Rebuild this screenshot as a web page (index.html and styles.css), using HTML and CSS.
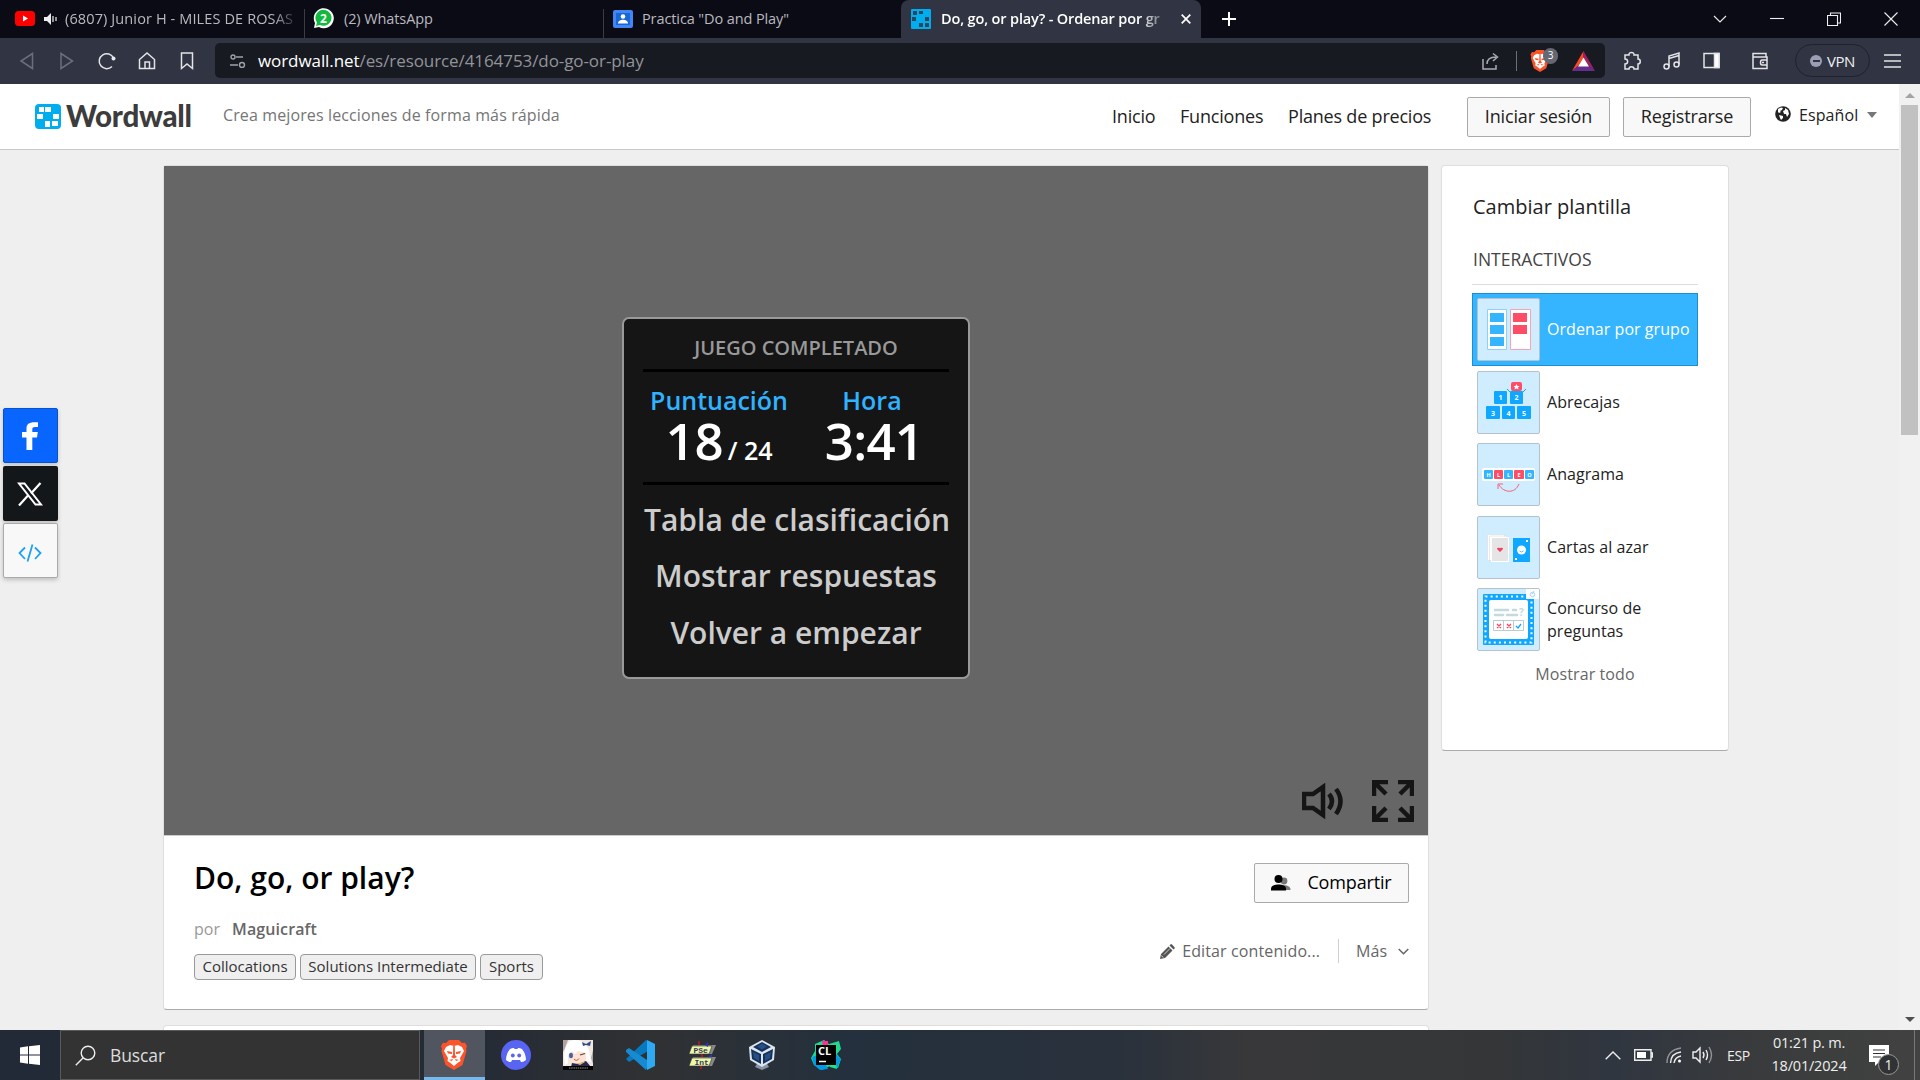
FILE: index.html
```html
<!DOCTYPE html>
<html lang="es">
<head>
<meta charset="utf-8">
<title>Do, go, or play? - Ordenar por grupo</title>
<link rel="stylesheet" href="styles.css">
</head>
<body>
<svg class="defs" width="0" height="0">
  <symbol id="brave" viewBox="0 0 26 30">
    <path fill="#fb542b" d="M8 0h10l3 3 3-.3L26 6l-1 3 .5 2-4 14L13 30 4.500 25 .5 11 1 9 0 6l2-3.300L5 3z"/>
    <path fill="#fff" d="M5 7l4-2 4 1 4-1 4 2 2 4-4 7 .5 3-3 2-3.500 3-3.500-3-3-2L7 18l-4-7z"/>
    <path fill="#fb542b" d="M6 11l5 1v2l-4-.5zM20 11l-5 1v2l4-.5zM12.200 6h1.600L14 15l2 2-3 1.500L10 17l2-2zM8 20l4-1-1 2zM18 20l-4-1 1 2z"/>
  </symbol>
</svg>
<header class="tabs">
  <div class="tab tab-video">
    <svg width="20" height="15" viewBox="0 0 20 15"><rect width="20" height="15" rx="3.500" fill="#f00"/><path d="M8 4.500v6l5-3z" fill="#fff"/></svg>
    <svg class="speaker" width="14" height="12" viewBox="0 0 14 12"><path d="M0 4h3l4-4v12L3 8H0z" fill="#eee"/><path d="M9 3v6M12 4v4" stroke="#ddd" stroke-width="1.300"/></svg>
    <span class="tab-title">(6807) Junior H - MILES DE ROSAS</span>
  </div>
  <div class="tab tab-chat">
    <svg width="21" height="21" viewBox="0 0 21 21"><path d="M1 20l1-5A10 10 0 1 1 6 19z" fill="#fff"/><path d="M3 18l1-3.500A8 8 0 1 1 7 17z" fill="#12b93e"/><text x="7" y="15" class="wa-count">2</text></svg>
    <span class="tab-title">(2) WhatsApp</span>
  </div>
  <div class="tab tab-class">
    <svg width="20" height="18" viewBox="0 0 20 18"><rect width="20" height="18" rx="2" fill="#4285f4"/><rect x="3" y="3" width="14" height="12" fill="#1967d2"/><circle cx="10" cy="6.500" r="2.300" fill="#fff"/><path d="M5 13.500c0-5 10-5 10 0z" fill="#fff"/></svg>
    <span class="tab-title">Practica "Do and Play"</span>
  </div>
  <div class="tab tab-active">
    <svg width="20" height="20" viewBox="0 0 20 20"><rect width="20" height="20" rx="1" fill="#00aeef"/><path fill="#313442" d="M2 2h4v4H2zM8 2h4v3H8zM1 8h4v4H1zM14 8h4v4h-4zM8 14h4v4H8zM14 14h4v4h-4z" opacity=".85"/></svg>
    <span class="tab-title">Do, go, or play? - Ordenar por gr</span>
    <svg class="tab-close" width="10" height="10" viewBox="0 0 10 10"><path d="M.7.7l8.600 8.600M9.300.7L.7 9.300" stroke="#fff" stroke-width="1.700"/></svg>
  </div>
  <svg class="new-tab" width="16" height="16" viewBox="0 0 16 16"><path d="M8 1v14M1 8h14" stroke="#fff" stroke-width="2"/></svg>
  <div class="window-controls">
    <svg viewBox="0 0 14 14"><path d="M1 4l6 6 6-6"/></svg>
    <svg viewBox="0 0 14 14"><path d="M0 6.500h14"/></svg>
    <svg viewBox="0 0 14 14"><path d="M.5 3.500h10v10H.5zM3.500 3V1h10v10h-2.500"/></svg>
    <svg viewBox="0 0 14 14"><path d="M.5.5l13 13M13.500.5l-13 13"/></svg>
  </div>
</header>

<div class="toolbar">
  <nav class="history">
    <svg class="dim" viewBox="0 0 20 20"><path d="M15.500 2.500v15L4 10z"/></svg>
    <svg class="dim" viewBox="0 0 20 20"><path d="M4 2.500v15L15.500 10z"/></svg>
    <svg viewBox="0 0 20 20"><path d="M15 15.500A7.500 7.500 0 1 1 16.500 7"/><circle cx="16.500" cy="7.500" r="2" fill="#e8e8ee" stroke="none"/></svg>
    <svg viewBox="0 0 20 20"><path d="M2.500 8.500L10 2l7.500 6.500V17.500h-15zM8 17v-6h4.500v6"/></svg>
    <svg viewBox="0 0 20 20"><path d="M4.500 2h11v15.500L10 13l-5.500 4.500z"/></svg>
  </nav>
  <div class="address">
    <svg class="site-info" width="16" height="14" viewBox="0 0 16 14"><circle cx="3" cy="3" r="2"/><path d="M6 3h7M0 11h8"/><circle cx="12" cy="11" r="2.500"/></svg>
    <span class="url"><b>wordwall.net</b>/es/resource/4164753/do-go-or-play</span>
    <svg class="share" width="18" height="18" viewBox="0 0 18 18"><path d="M1 7v10h13v-4M5 12c0-5 3-7 9-7M11 1.500L15.500 5 11 9"/></svg>
    <i class="divider"></i>
    <div class="shield"><svg width="20" height="22"><use href="#brave"/></svg><span>3</span></div>
    <svg width="23" height="20" viewBox="0 0 23 20"><path fill="#ff4724" d="M11.500 0v7L6 15l-6 5z"/><path fill="#9e1f63" d="M11.500 0L23 20l-6-5-5.500-8z"/><path fill="#662d91" d="M0 20l6-5h11l6 5z"/><path fill="#fff" d="M11.500 6.500l5.500 9H6z"/></svg>
  </div>
  <div class="tools">
    <svg viewBox="0 0 20 20"><path d="M3 4h4c-.5-3.500 5.500-3.500 5 0h4v4c3 0 3 5 0 5v5h-4c0-3-5-3-5 0H3v-5c3.500 0 3.500-5 0-5z"/></svg>
    <svg viewBox="0 0 20 20"><path d="M7 15.500V5l10-3v11.500M7 7.500l10-3"/><circle cx="4.500" cy="15.500" r="2.500"/><circle cx="14.500" cy="13.500" r="2.500"/></svg>
    <svg viewBox="0 0 20 20"><path d="M2 2.500h15v14H2z"/><path d="M12.500 2.500H17v14h-4.500z" fill="#fff"/></svg>
    <svg viewBox="0 0 20 20"><path d="M16 6V2.500H3v15h14V6H3.500M17 9h-5c-2 0-2 5 0 5h5zM12 11.500h2"/></svg>
  </div>
  <div class="vpn"><i></i>VPN</div>
  <svg class="menu" width="17" height="14" viewBox="0 0 17 14"><path d="M0 1h17M0 7h17M0 13h17"/></svg>
</div>

<div class="viewport">
  <div class="page">
    <header class="site-header">
      <svg class="brand-mark" width="26" height="25" viewBox="0 0 26 25"><rect width="26" height="25" rx="4" fill="#00aeef"/><path fill="#fff" d="M4 3h5v5H4zM10 3h6v5h-6zM2 10h6v5H2zM18 10h6v5h-6zM10 17h5v6h-5zM17 17h6v5h-6z"/></svg>
      <span class="brand">Wordwall</span>
      <span class="tagline">Crea mejores lecciones de forma más rápida</span>
      <nav class="site-nav">
        <a class="n-home">Inicio</a><a class="n-feat">Funciones</a><a class="n-plan">Planes de precios</a>
      </nav>
      <button class="btn login">Iniciar sesión</button>
      <button class="btn signup">Registrarse</button>
      <div class="language">
        <svg width="16" height="16" viewBox="0 0 16 16"><circle cx="8" cy="8" r="7.800" fill="#222"/><path fill="#fff" d="M3 3l3-1.500 2 .5-1 2-2 1 1 1-2 1-1-1zM10 2l3 2 1 4-2 3-1-3-2 0-1-3 2-1zM4 9l4 1 0 2-2 2-1-2z"/></svg>
        <span>Español</span><i></i>
      </div>
    </header>

    <main class="content">
      <div class="primary">
        <section class="activity">
          <div class="stage">
            <div class="result">
              <h2>JUEGO COMPLETADO</h2>
              <div class="scores">
                <div class="score points"><h3>Puntuación</h3><p>18<small>/ 24</small></p></div>
                <div class="score time"><h3>Hora</h3><p>3:41</p></div>
              </div>
              <a class="r1">Tabla de clasificación</a>
              <a class="r2">Mostrar respuestas</a>
              <a class="r3">Volver a empezar</a>
            </div>
            <div class="stage-controls">
              <svg width="42" height="36" viewBox="0 0 42 36"><path d="M2 11h9L21 4v28l-10-7H2z"/><path d="M27 11q6 7 0 15M34 6q9 12 0 25"/></svg>
              <svg width="42" height="42" viewBox="0 0 42 42"><path d="M2 16V2h14M2 2l12 12M26 2h14v14M40 2L28 14M2 26v14h14M2 40l12-12M26 40h14V26M40 40L28 28"/></svg>
            </div>
          </div>
          <div class="details">
            <div class="about">
              <h1>Do, go, or play?</h1>
              <p class="author">por <b>Maguicraft</b></p>
              <div class="tags"><span class="t1">Collocations</span><span class="t2">Solutions Intermediate</span><span class="t3">Sports</span></div>
            </div>
            <div class="actions">
              <button class="btn share-btn"><svg width="20" height="16" viewBox="0 0 20 16"><g fill="#777"><circle cx="13" cy="6" r="3.400"/><path d="M9 15v-3c2-3 11-2 10.500 3z"/></g><circle cx="7.500" cy="4" r="4"/><path d="M0 15.500v-2C0 8 15 8 15 13.500v2z"/></svg>Compartir</button>
              <div class="edit-row">
                <svg width="15" height="15" viewBox="0 0 15 15"><path fill="#555" d="M0 15l1-5 7.500-7.500 4 4L5 14zM9.500 1.500L11 0q1 0 4 4l-1.500 1.500z"/><path d="M4 10.500l6-6M1.300 11.500l2.200 2.200" stroke="#fff" stroke-width=".7"/></svg>
                <span class="edit">Editar contenido...</span><i></i><span class="more">Más</span>
                <svg width="11" height="7" viewBox="0 0 11 7"><path d="M.7 1l4.800 4.800L10.300 1" fill="none" stroke="#666" stroke-width="1.500"/></svg>
              </div>
            </div>
          </div>
        </section>
        <section class="next-card"></section>
      </div>

      <aside class="templates">
        <h2>Cambiar plantilla</h2>
        <h3>INTERACTIVOS</h3>
        <ul>
          <li class="selected"><svg class="thumb" viewBox="0 0 61 61"><path fill="#fff" stroke="#8cd0fb" d="M9.500 10.500h19v40h-19z"/><path fill="#fff" stroke="#f7a3b1" d="M32.500 10.500h20v40h-20z"/><path fill="#35b5ff" d="M12 14h14v9H12zM12 26h14v9H12zM12 38h14v9H12z"/><path fill="#ff4d67" d="M35 14h14v9H35zM35 26h14v9H35z"/></svg><span>Ordenar por grupo</span></li>
          <li><svg class="thumb" viewBox="0 0 61 61"><g fill="#0fa7ff"><rect x="16" y="19" width="13" height="13" rx="1"/><rect x="32" y="19" width="13" height="13" rx="1"/><rect x="8" y="34" width="14" height="13" rx="1"/><rect x="24" y="34" width="13" height="13" rx="1"/><rect x="39" y="34" width="14" height="13" rx="1"/></g><rect x="33" y="10" width="11" height="9" rx="2" fill="#ff4d67"/><path fill="#fff" d="M38.500 12l1 2h2l-1.500 1.500.5 2-2-1-2 1 .5-2L35.500 14h2z"/><path d="M29 17l3 3M48 17l-3 3" stroke="#0fa7ff"/><g class="box-num"><text x="22.500" y="28">1</text><text x="38.500" y="28">2</text><text x="15" y="43.500">3</text><text x="30.500" y="43.500">4</text><text x="46" y="43.500">5</text></g></svg><span>Abrecajas</span></li>
          <li><svg class="thumb" viewBox="0 0 61 61"><rect x="4" y="24" width="53" height="13" rx="2" fill="#fff"/><g fill="#35b5ff"><rect x="6" y="26" width="9" height="9" rx="1"/><rect x="26" y="26" width="9" height="9" rx="1"/><rect x="47" y="26" width="9" height="9" rx="1"/></g><g fill="#ff4d67"><rect x="16" y="26" width="9" height="9" rx="1"/><rect x="36" y="26" width="10" height="9" rx="1"/></g><g class="tile"><text x="10.500" y="32.500">H</text><text x="20.500" y="32.500">L</text><text x="30.500" y="32.500">L</text><text x="41" y="32.500">E</text><text x="51.500" y="32.500">O</text></g><path d="M41 40c-4 10-15 9-20 1m-1 4l0-5 5 0" fill="none" stroke="#ff5a73"/></svg><span>Anagrama</span></li>
          <li><svg class="thumb" viewBox="0 0 61 61"><path fill="#fff" stroke="#d8dee2" stroke-width=".6" d="M9.500 17.500h17v26h-17zM11.500 19h17v25h-17z"/><path fill="#e5e5e5" stroke="#fff" d="M13.500 20.500h17v24h-17z"/><path fill="#f4455f" d="M22 35l-3-3q0-2 3-1 3-1 3 1z"/><rect x="35" y="21" width="17" height="24" fill="#0fa7ff"/><circle cx="43.500" cy="33" r="4.500" fill="#fff"/><path d="M41.500 34q2 2 4 0" fill="none" stroke="#0fa7ff" stroke-width=".7"/><path fill="#fff" d="M48 23h2v2h-2zM37 41h2v2h-2z"/></svg><span>Cartas al azar</span></li>
          <li><svg class="thumb" viewBox="0 0 61 61"><rect x="5" y="5" width="51" height="51" rx="1" fill="#0fa7ff"/><rect x="7.500" y="7.500" width="46" height="46" fill="none" stroke="#fff" stroke-width="2" stroke-dasharray="2 3.110"/><rect x="11" y="11" width="39" height="39" rx="2" fill="#fff"/><path stroke="#c3dade" stroke-width="2.500" stroke-linecap="round" d="M17 21h13M35 21h3M17 26h8M29 26h10"/><text class="quiz-q" x="41" y="27">?</text><path fill="none" stroke="#b9cdd2" d="M15.500 31.500h30v10h-30zM25.500 32v9M35.500 32v9"/><path stroke="#f4455f" stroke-width="1.300" d="M19 35l4 4M23 35l-4 4M29 35l4 4M33 35l-4 4"/><path fill="none" stroke="#0fa7ff" stroke-width="1.300" d="M38 37l2 2 3-4"/><path fill="#fff" d="M48 0h13v10H48z"/><circle cx="54.500" cy="5.500" r="2.200" fill="none" stroke="#a2d5f5"/><path d="M54 5l2-3" stroke="#a2d5f5"/></svg><span>Concurso de preguntas</span></li>
        </ul>
        <a class="show-all">Mostrar todo</a>
      </aside>
    </main>

    <div class="social">
      <a class="fb"><svg width="16" height="28" viewBox="0 0 16 28"><path fill="#fff" d="M4.500 28V15.500H0V10h4.500V6.500C4.500 1.500 7.500-.5 16 .300V5h-3c-2.500 0-2.700 1-2.700 2.500V10h5.500l-.8 5.500h-4.700V28z"/></svg></a>
      <a class="xx"><svg width="26" height="24" viewBox="0 0 26 24"><path d="M2 1.500h5.500L24 22.500h-5.500z" fill="none" stroke="#fff" stroke-width="2"/><path d="M23.500 1L14 11.500M11 13.500L2 23.500" stroke="#fff" stroke-width="2.200"/></svg></a>
      <a class="embed"><svg width="24" height="18" viewBox="0 0 24 18"><path d="M7 3.500L1.500 9 7 15M17 3.500L22.500 9 17 15M14.500.5l-5 17" fill="none" stroke="#1da1f2" stroke-width="1.800"/></svg></a>
    </div>
  </div>
  <div class="scrollbar"><i class="up"></i><b></b><i class="down"></i></div>
</div>

<footer class="taskbar">
  <div class="start"><svg width="20" height="20" viewBox="0 0 20 20"><path fill="#fff" d="M0 2.500l8-1.200v8.200H0zM9 1.200L20 0v9.500H9zM0 10.500h8v8.300L0 17.600zM9 10.500h11V20L9 18.800z"/></svg></div>
  <div class="search"><svg width="21" height="21" viewBox="0 0 21 21"><circle cx="13" cy="8" r="6.800"/><path d="M8.200 12.800L.8 20.300"/></svg>Buscar</div>
  <div class="apps">
    <div class="app running"><svg width="26" height="30"><use href="#brave"/></svg></div>
    <div class="app"><svg width="30" height="30" viewBox="0 0 30 30"><circle cx="15" cy="15" r="15" fill="#5865f2"/><path fill="#fff" d="M9 9q3-1.500 4-1l.5 1h3l.5-1q1-.5 4 1 4 5 4 11-3 2.500-5 2l-1-2h-8l-1 2q-2 .5-5-2 0-6 4-11z"/><circle cx="11.800" cy="15.500" r="1.900" fill="#5865f2"/><circle cx="18.200" cy="15.500" r="1.900" fill="#5865f2"/></svg></div>
    <div class="app"><svg width="30" height="30" viewBox="0 0 30 30"><path fill="#efe7e2" d="M0 0h30v30H0z"/><path fill="#b2a39f" d="M0 0h5L2 8 0 12zM30 10l-2 8 2 6z"/><path fill="#ffe2d2" d="M5 11l17-3 2 11q-6 7-17 3z"/><path fill="#fff" d="M7 1q13-4 19 9l2 12-5-1 0-8-8-2-3 3-3-3-4 4v8l-3 2Q-1 8 7 1z"/><ellipse cx="8" cy="15.500" rx="2" ry="2.800" fill="#4665a5"/><path d="M17 15l5-1.500" stroke="#53424a" stroke-width="1.200"/><path d="M11 19q2.500 3 5-.5" fill="none" stroke="#ac5d51"/><path fill="#344b86" d="M19 2l4 2 5-3-1 5-4-1-3 1z"/><path fill="#262a4e" d="M9 23l6 1 8-3 5 6H8z"/><path fill="#e5bb75" d="M12 23l5 2 5-3-2 0-3 1z"/><path d="M0 26h30v4H0z"/><path d="M6 28h19" stroke="#999" stroke-dasharray="1.500 .7"/></svg></div>
    <div class="app"><svg width="30" height="30" viewBox="0 0 30 30"><path fill="#0879bf" d="M1 19l20-19 4 3v7L4 22z"/><path fill="#168bd1" d="M1 10l3-2 21 14-4 8L1 12z"/><path fill="#2faaf2" d="M22 0l8 4v22l-8 4z"/></svg></div>
    <div class="app"><svg width="28" height="28" viewBox="0 0 28 28"><path fill="#888" d="M5 4h23l-4 9H3zM5 16h23l-4 9H3z"/><path fill="#edf9a8" stroke="#333" stroke-width=".6" d="M4 5h20l-3 8H1zM4 17h20l-3 8H1z"/><text x="5.500" y="12" class="pseint">PSe</text><text x="6.500" y="24" class="pseint">Int</text><path stroke="#a01c24" stroke-width="2" d="M11 0v4M14 13v3M13 25v3"/><path fill="#2438c0" d="M17 4l3-3v5zM20 16l4-3v3z"/></svg></div>
    <div class="app vbox"><svg width="26" height="30" viewBox="0 0 26 30"><path fill="#8794a6" d="M9 22h8l3 5-7 3-7-3z"/><path fill="#dce5ee" d="M13 0l13 7-1 13-12 7-12-7L0 7z"/><path fill="#14325c" d="M13 2l9 5-9 5-9-5zM2 9l10 5v10L3 19zM24 9l-10 5v10l9-5z"/><path fill="#274f83" d="M13 3.500l5 3-5 3-5-3zM4 12l6 3v6l-5-3zM22 12l-6 3v6l5-3z"/></svg></div>
    <div class="app"><svg width="30" height="30" viewBox="0 0 30 30"><path fill="#22d88f" d="M4 4L13 0l5 4 10-3 2 8-4 5 4 5-3 9-8-2-8 4-8-5-3-7 4-7z"/><path fill="#ff3195" d="M11 1l6 0 0 6h-5z"/><path fill="#009ae5" d="M1 17l8-3 8 15-8 1-6-5zM25 14l5 5-4 9-6-3z"/><path fill="#19e58b" d="M17 24l8 0 1 5-7-2z"/><path d="M5 5h20v20H5z"/><text x="7" y="15" class="clion">CL</text><path d="M8 21.500h7" stroke="#fff" stroke-width="1.500"/></svg></div>
  </div>
  <div class="tray">
    <svg class="chev" width="16" height="9" viewBox="0 0 16 9"><path d="M.7 8.300L8 1l7.300 7.300"/></svg>
    <svg class="bat" width="19" height="12" viewBox="0 0 19 12"><path d="M.7.700h16.300v10.600H.7zM17 4h1.500v4H17"/><path d="M3 3h9v6H3z" fill="#fff" stroke="none"/></svg>
    <svg class="wifi" width="16" height="16" viewBox="0 0 16 16"><path opacity=".5" d="M1 16Q1 3 15 1"/><path d="M4.500 16Q5 6 15 5M8 16q1-6 7-7"/><circle cx="13.500" cy="14" r="1.500" fill="#fff" stroke="none"/></svg>
    <svg class="vol" width="21" height="18" viewBox="0 0 21 18"><path d="M1 6h3l4-4v14l-4-4H1zM11 6q2 3 0 6M14 4q3 5 0 10"/><path opacity=".5" d="M17 1q5 8 0 16"/></svg>
    <span class="lang">ESP</span>
    <div class="clock"><span>01:21 p. m.</span><span>18/01/2024</span></div>
    <div class="notes"><svg width="20" height="21" viewBox="0 0 20 21"><path fill="#fff" d="M0 0h20v17H10l-4 4v-4H0z"/><path stroke="#333" stroke-width="1.200" d="M4 5h12M4 8.500h12M4 12h8"/></svg><span>1</span></div>
  </div>
</footer>
</body>
</html>
```
FILE: styles.css
```css
* { box-sizing: border-box; margin: 0; padding: 0; }
body { width: 1920px; height: 1080px; overflow: hidden; display: flex; flex-direction: column; font-family: "Open Sans", "Noto Sans", sans-serif; }
svg { flex: none; display: block; }
.defs { position: absolute; }
button { font-family: inherit; }
span, a, h1, h2, h3, button { white-space: nowrap; }

/* Browser tabs */
.tabs { height: 38px; flex: none; background: #0b0b15; display: flex; align-items: center; color: #b9b9bf; font-size: 14.500px; }
.tab { height: 38px; display: flex; align-items: center; padding-bottom: 1px; }
.tab-title { letter-spacing: -.1px; }
.tab-video { width: 304px; padding-left: 15px; }
.tab-video .speaker { margin: 0 7px 0 9px; }
.tab-video .tab-title { letter-spacing: .12px; width: 230px; mask-image: linear-gradient(90deg, #000 90%, rgba(0,0,0,.2)); }
.tab-chat { width: 299px; padding-left: 9px; gap: 10px; }
.tab-class { width: 298px; padding-left: 10px; gap: 9px; }
.tab-chat, .tab-class { background: linear-gradient(#3a3b43, #3a3b43) 0 9px/1px 29px no-repeat; }
.tab-active { width: 300px; padding-left: 10px; background: #313442; border-radius: 8px 8px 0 0; color: #fff; font-weight: 600; }
.tab-active .tab-title { width: 226px; margin: 0 14px 0 10px; letter-spacing: -.15px; mask-image: linear-gradient(90deg, #000 88%, rgba(0,0,0,.1)); }
.new-tab { margin-left: 20px; }
.window-controls { margin-left: auto; padding-right: 22px; display: flex; gap: 43px; }
.window-controls svg { width: 14px; height: 14px; fill: none; stroke: #eee; stroke-width: 1.100; }
.wa-count { font: 700 12px "Open Sans", sans-serif; fill: #fff; }

/* Browser toolbar */
.toolbar { height: 46px; flex: none; background: #313442; display: flex; align-items: center; padding-bottom: 1px; }
.toolbar svg { fill: none; stroke: #e3e3e8; stroke-width: 1.500; }
.history { width: 215px; padding-left: 17px; display: flex; gap: 20px; }
.history svg, .tools svg { width: 20px; height: 20px; }
.history .dim { stroke: #6c6f7b; }
.address { width: 1390px; height: 35px; background: #181a21; border-radius: 5px; display: flex; align-items: center; padding: 0 10px 0 15px; }
.address .site-info { stroke: #a0a2aa; stroke-width: 1.400; }
.url { margin-left: 12px; font-size: 17px; letter-spacing: -.08px; color: #92949b; margin-right: auto; }
.url b { font-weight: 400; color: #fff; }
.address .share { stroke: #a9abb2; margin-right: 1px; }
.address .divider { width: 1px; height: 20px; background: #6c6e77; margin: 0 13px 0 15px; }
.address .shield { display: flex; width: 42px; position: relative; }
.shield svg, .address > svg:last-child { stroke: none; }
.shield span { position: absolute; left: 13px; top: -2px; width: 15px; height: 16px; border-radius: 8px; background: #656873; color: #fff; font-size: 10px; line-height: 15px; text-align: center; }
.tools { width: 190px; padding-left: 17px; display: flex; gap: 20px; }
.tools svg:last-child { margin-left: 8px; }
.vpn { width: 75px; height: 33px; border: 1px solid #1f212c; border-radius: 17px; display: flex; align-items: center; justify-content: center; gap: 5px; color: #f0f0f4; font-size: 15px; letter-spacing: -.5px; }
.vpn i { width: 12px; height: 12px; border-radius: 6px; background: linear-gradient(#313442, #313442) center/7px 2px no-repeat #9c9eb5; }
.menu { margin-left: 14px; }

/* Page */
.viewport { height: 946px; flex: none; display: flex; }
.page { width: 1899px; position: relative; background: #efefef; overflow: hidden; }
.site-header { height: 66px; background: #fff; border-bottom: 1px solid #c8c8c8; display: flex; align-items: flex-start; padding-left: 35px; color: #222; }
.brand-mark { margin-top: 20px; }
.brand { width: 162px; padding-left: 5px; font: 900 29.500px/36px Lato, sans-serif; color: #3c3c3c; letter-spacing: -.25px; margin-top: 14px; }
.tagline { width: 889px; font-size: 16px; line-height: 24px; letter-spacing: .12px; margin-top: 19px; color: #757575; }
.site-nav { display: flex; font-size: 18px; line-height: 28px; letter-spacing: -.2px; margin-top: 18px; }
.n-home { width: 68px; } .n-feat { width: 108px; } .n-plan { width: 179px; }
.btn { height: 40px; border: 1px solid #aaa; border-radius: 2px; background: #f8f8f8; color: #222; font-size: 18px; letter-spacing: -.15px; padding-bottom: 2px; }
.login { width: 143px; margin: 13px 13px 0 0; }
.signup { width: 128px; margin-top: 13px; }
.language { display: flex; align-items: center; margin: 18px 0 0 24px; font-size: 16px; line-height: 26px; }
.language svg { margin-bottom: 3px; }
.language span { margin: 0 9px 0 8px; letter-spacing: .1px; }
.language i { border: 5px solid transparent; border-top: 6px solid #777; border-bottom: 0; }

.content { display: flex; align-items: flex-start; gap: 12px; padding: 15px 0 0 163px; }
.primary { width: 1266px; }
.activity, .templates, .next-card { background: #fff; border: 1px solid #dedede; border-bottom-color: #aaa; border-radius: 4px; }
.activity { height: 845px; }
.stage { height: 670px; background: #666; border-bottom: 1px solid #ccc; padding-top: 151px; position: relative; }
.result { width: 348px; height: 362px; margin-left: 458px; padding: 16px 19px; background: #151515; border: 2px solid #999; border-radius: 7px; text-align: center; display: flex; flex-direction: column; }
.result h2 { height: 34px; font-size: 20px; line-height: 26px; font-weight: 600; color: #999; }
.scores { height: 117px; border: solid #000; border-width: 3px 0; display: flex; padding-top: 11px; color: #fff; }
.points { width: 152px; } .time { width: 154px; }
.score h3 { font-size: 25px; line-height: 34px; font-weight: 600; color: #30b2ff; }
.score p { font-size: 51px; line-height: 46px; font-weight: 600; }
.time p { letter-spacing: -.7px; padding-left: 4px; }
.score small { font-size: 25px; margin-left: 4px; }
.result a { font-size: 30px; line-height: 56.500px; font-weight: 600; color: #ccc; }
.result .r1 { margin-top: 7px; padding-left: 1px; }
.stage-controls { position: absolute; right: 14px; bottom: 13px; display: flex; align-items: center; gap: 28px; }
.stage-controls svg { fill: none; stroke: #151515; stroke-width: 4.500; }
.details { display: flex; justify-content: space-between; padding: 21px 19px 0 30px; }
.about h1 { font-size: 30px; line-height: 42px; font-weight: 600; color: #000; }
.author { margin-top: 18px; font-size: 16px; line-height: 24px; color: #999; }
.author b { font-weight: 600; color: #666; margin-left: 8px; letter-spacing: .1px; }
.tags { display: flex; gap: 4px; margin-top: 13px; }
.tags span { height: 26px; border: 1px solid #999; border-radius: 4px; background: #efefef; color: #333; font-size: 15px; line-height: 23px; text-align: center; }
.t1 { width: 102px; } .t2 { width: 176px; } .t3 { width: 63px; }
.actions { display: flex; flex-direction: column; align-items: flex-end; padding-top: 6px; }
.share-btn { width: 155px; display: flex; align-items: center; justify-content: center; gap: 16px; color: #000; }
.share-btn svg { margin-top: 2px; }
.edit-row { display: flex; align-items: center; height: 24px; margin-top: 36px; font-size: 16px; color: #666; }
.edit { margin: 0 18px 0 7px; letter-spacing: .12px; }
.edit-row i { width: 1px; height: 24px; background: #d0d0d0; margin-right: 17px; }
.more { margin-right: 11px; }
.next-card { height: 100px; margin-top: 15px; }

/* Template picker */
.templates { width: 288px; height: 586px; padding: 26px 30px 0; }
.templates h2 { font-size: 20px; line-height: 30px; font-weight: 400; color: #222; padding-left: 1px; }
.templates h3 { font-size: 17.500px; line-height: 25px; font-weight: 400; color: #444; margin-top: 25px; height: 38px; border-bottom: 1px solid #ddd; padding-left: 1px; }
.templates ul { list-style: none; margin-top: 8px; }
.templates li { height: 72.500px; display: flex; align-items: center; gap: 7px; padding-left: 5px; font-size: 16px; line-height: 23px; color: #222; }
.templates li span { width: 140px; white-space: normal; letter-spacing: .05px; }
.templates li.selected { height: 73px; background: #35b5ff; box-shadow: inset 0 0 0 1px #1b8fd2; color: #fff; width: 226px; }
.templates li.selected span { white-space: nowrap; }
.thumb { width: 63px; height: 63px; border: 1px solid #b4c3cb; border-radius: 2px; background: #cfedff; }
.box-num, .tile { fill: #fff; font: 700 7px "Open Sans", sans-serif; text-anchor: middle; }
.tile { font-size: 5.500px; }
.quiz-q { font: 700 10px "Open Sans", sans-serif; fill: #c3dade; }
.show-all { display: block; text-align: center; font-size: 16px; line-height: 24px; letter-spacing: .1px; margin-top: 6px; color: #666; }

/* Share rail, fixed over the page */
.social { position: absolute; left: 3px; top: 324px; display: flex; flex-direction: column; gap: 3px; }
.social a { width: 55px; height: 55px; border-radius: 2px; display: flex; align-items: center; justify-content: center; box-shadow: 0 2px 4px rgba(0,0,0,.2); padding-right: 1px; }
.fb { background: #0866ff; border: 1px solid #0753cf; }
.xx { background: #14171a; }
.social .embed { background: #f8f8f8; border: 1px solid #aaa; padding-top: 4px; margin-top: -1px; }

.scrollbar { width: 21px; background: #f1f1f1; display: flex; flex-direction: column; align-items: center; }
.scrollbar i { border: 5px solid transparent; }
.scrollbar .up { margin-top: 9px; border-top: 0; border-bottom-color: #a3a3a3; }
.scrollbar b { width: 17px; height: 330px; margin-top: 7px; background: #c1c1c1; }
.scrollbar .down { margin: auto 0 8px; border-bottom: 0; border-top-color: #505050; }

/* Taskbar */
.taskbar { height: 50px; flex: none; display: flex; background: linear-gradient(90deg, #222a37 0, #252b35 25%, #303133 34%, #24303d 44%, #29313c 58%, #38383a 65%, #343638 78%, #303640 84%, #3a3b3c 92%, #414241); color: #eee; }
.start { width: 60px; padding: 15px 20px; }
.search { width: 360px; border: 1px solid #595959; background: #333; display: flex; align-items: center; padding-left: 14px; gap: 14px; font-size: 17.500px; color: #ddd; letter-spacing: -.1px; }
.search svg, .tray svg { fill: none; stroke: #eee; stroke-width: 1.400; }
.apps { display: flex; margin-left: 4px; }
.app { width: 62px; height: 50px; display: flex; align-items: center; justify-content: center; }
.running { width: 61px; padding-right: 2px; background: #50555f; box-shadow: inset 0 -3px #76b9ed; }
.vbox { padding-right: 4px; }
.pseint { font: 700 8px "Liberation Mono", monospace; fill: #383860; }
.clion { font: 700 11px "Open Sans", sans-serif; fill: #fff; }
.tray { margin-left: auto; display: flex; align-items: center; padding-right: 5px; }
.tray .bat { margin-left: 13px; }
.tray .wifi { margin-left: 13px; }
.tray .vol { margin-left: 10px; }
.lang { width: 25px; margin-left: 14px; font-size: 14px; letter-spacing: -.3px; }
.clock { width: 112px; display: flex; flex-direction: column; text-align: center; font-size: 14.500px; line-height: 22.500px; letter-spacing: -.2px; margin-left: 1px; padding-bottom: 1px; }
.notes { width: 46px; margin-left: 4px; position: relative; border-right: 1px solid #777; height: 50px; padding-top: 15px; }
.notes svg { stroke: none; }
.notes span { position: absolute; left: 9px; top: 24px; width: 21px; height: 21px; border: 1px solid #999; border-radius: 11px; background: #303234; text-align: center; font-size: 14px; line-height: 19px; }
```
